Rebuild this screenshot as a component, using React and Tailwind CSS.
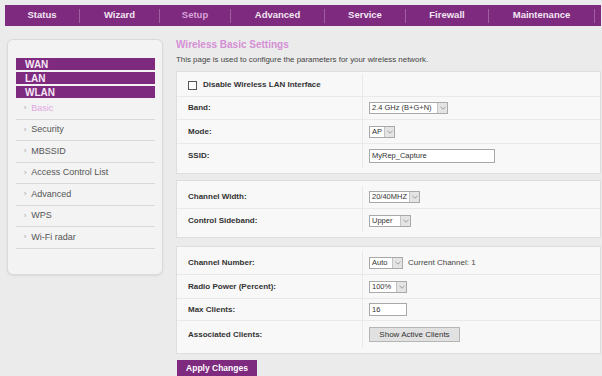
import React from 'react';

const navItems = [
  { label: 'Status', w: 'w-[75px]' },
  { label: 'Wizard', w: 'w-[80px]' },
  { label: 'Setup', w: 'w-[71px]', active: true },
  { label: 'Advanced', w: 'w-[94px]' },
  { label: 'Service', w: 'w-[81px]' },
  { label: 'Firewall', w: 'w-[83px]' },
  { label: 'Maintenance', w: 'w-[106px]' },
];

const sideItems = ['Basic', 'Security', 'MBSSID', 'Access Control List', 'Advanced', 'WPS', 'Wi-Fi radar'];

function Chevron() {
  return (
    <span className="flex w-[10px] items-center justify-center self-stretch border-l border-[#c4c4c4] bg-[#e4e4e4]">
      <svg width="6" height="4" viewBox="0 0 6 4">
        <polyline points="0.5,0.8 3,3.2 5.5,0.8" fill="none" stroke="#8a8a8a" strokeWidth="0.8" />
      </svg>
    </span>
  );
}

function Select({ value, w }) {
  return (
    <span className={`inline-flex h-[12px] ${w} items-stretch border border-[#a9a9a9] bg-white`}>
      <span className="flex-1 pl-[2px] text-[7.5px] leading-[10px] text-[#333]">{value}</span>
      <Chevron />
    </span>
  );
}

function Row({ label, h, children, last }) {
  return (
    <div className={`flex ${h} ${last ? '' : 'border-b border-[#e9e9e9]'}`}>
      <div className="flex w-[186px] items-center border-r border-[#e9e9e9] pl-[11px] text-[8px] font-bold text-[#333]">
        {label}
      </div>
      <div className="flex flex-1 items-center pl-[6px]">{children}</div>
    </div>
  );
}

export default function App() {
  return (
    <div className="h-[376px] w-[602px] overflow-hidden bg-[#ebebeb] font-['Liberation_Sans',Arial,sans-serif]">
      {/* top menu */}
      <div className="ml-[5px] mt-[5px] flex h-[21px] w-[596px] items-center bg-[#7e2a7e]">
        {navItems.map((item) => (
          <div
            key={item.label}
            className={`${item.w} flex h-[14px] items-center justify-center border-r border-[#a25ea2] text-[9.5px] font-bold ${item.active ? 'text-[#d9a3d9]' : 'text-[#f3e6f3]'}`}
          >
            {item.label}
          </div>
        ))}
      </div>

      <div className="flex pt-[13px]">
        {/* sidebar */}
        <div className="ml-[7px] h-[236px] w-[156px] rounded-[6px] border border-[#dadada] bg-[#f3f3f3] pl-[8px] pr-[7px] pt-[18px] shadow-[0_1px_2px_rgba(0,0,0,0.08)]">
          <div className="flex flex-col gap-[2px]">
            {['WAN', 'LAN', 'WLAN'].map((s) => (
              <div key={s} className="flex h-[12px] items-center bg-[#7e2a7e] pl-[9px] text-[10px] font-bold text-[#f6e6f6]">
                {s}
              </div>
            ))}
          </div>
          {sideItems.map((s, i) => (
            <div
              key={s}
              className={`flex h-[21.5px] items-center border-b border-[#d8d8d8] pl-[8px] text-[9px] ${i === 0 ? 'text-[#e2a6e2]' : 'text-[#555]'}`}
            >
              <span className="mr-[5px] text-[7px] text-[#999]">›</span>
              {s}
            </div>
          ))}
        </div>

        {/* main */}
        <div className="ml-[13px] w-[425px]">
          <div className="text-[10px] font-bold leading-[12px] text-[#d58fd5]">Wireless Basic Settings</div>
          <div className="mt-[4px] text-[7.9px] leading-[10px] text-[#444]">
            This page is used to configure the parameters for your wireless network.
          </div>

          <div className="mt-[6px] border border-[#dedede] bg-[#f8f8f8] pb-[5px] pt-[2px]">
            <Row label={<span className="flex items-center"><span className="mr-[6px] inline-block h-[9px] w-[9px] border border-[#555] bg-white" />Disable Wireless LAN Interface</span>} h="h-[23px]" />
            <Row label="Band:" h="h-[23px]">
              <Select value="2.4 GHz (B+G+N)" w="w-[79px]" />
            </Row>
            <Row label="Mode:" h="h-[24px]">
              <Select value="AP" w="w-[26px]" />
            </Row>
            <Row label="SSID:" h="h-[24px]" last>
              <span className="flex h-[14px] w-[126px] items-center border border-[#a9a9a9] bg-white pl-[2px] text-[7.5px] text-[#333]">
                MyRep_Capture
              </span>
            </Row>
          </div>

          <div className="mt-[6px] border border-[#dedede] bg-[#f8f8f8] pb-[5px] pt-[5px]">
            <Row label="Channel Width:" h="h-[23px]">
              <Select value="20/40MHZ" w="w-[51px]" />
            </Row>
            <Row label="Control Sideband:" h="h-[23px]" last>
              <Select value="Upper" w="w-[42px]" />
            </Row>
          </div>

          <div className="mt-[8px] border border-[#dedede] bg-[#f8f8f8] pb-[5px] pt-[4px]">
            <Row label="Channel Number:" h="h-[24px]">
              <Select value="Auto" w="w-[34px]" />
              <span className="ml-[5px] text-[8px] text-[#444]">Current Channel: 1</span>
            </Row>
            <Row label="Radio Power (Percent):" h="h-[24px]">
              <Select value="100%" w="w-[38px]" />
            </Row>
            <Row label="Max Clients:" h="h-[22px]">
              <span className="flex h-[13px] w-[38px] items-center border border-[#a9a9a9] bg-white pl-[2px] text-[7.5px] text-[#333]">
                16
              </span>
            </Row>
            <Row label="Associated Clients:" h="h-[27px]" last>
              <button className="flex h-[15px] w-[91px] items-center justify-center border border-[#b5b5b5] bg-[#e1e1e1] text-[8px] text-[#333]">
                Show Active Clients
              </button>
            </Row>
          </div>

          <button className="ml-[1px] mt-[6px] flex h-[17px] w-[80px] items-center justify-center bg-[#7e2a7e] text-[8.5px] font-bold text-white">
            Apply Changes
          </button>
        </div>
      </div>
    </div>
  );
}
